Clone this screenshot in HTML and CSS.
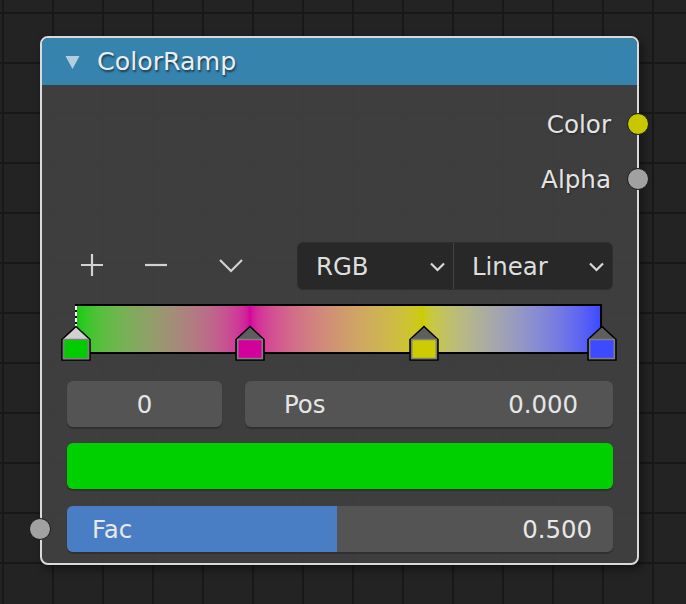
FILE: index.html
```html
<!DOCTYPE html>
<html>
<head>
<meta charset="utf-8">
<link rel="stylesheet" href="styles.css">
</head>
<body>
<div class="canvas">
  <div class="node">
    <div class="header">
      <svg class="collapse" width="15" height="15" viewBox="0 0 15 15"><polygon points="0.5,1 14.5,1 7.5,14" fill="#b3cfdd"/></svg>
      <span class="title">ColorRamp</span>
    </div>
    <div class="body">
      <div class="out-row"><span>Color</span><span class="socket sock-out sock-yellow"></span></div>
      <div class="out-row"><span>Alpha</span><span class="socket sock-out sock-grey"></span></div>

      <div class="tools">
        <svg class="tool tool-plus" width="24" height="24" viewBox="0 0 24 24"><path d="M12 1V23M1 12H23" stroke="#d2d2d2" stroke-width="2.2" fill="none"/></svg>
        <svg class="tool tool-minus" width="24" height="24" viewBox="0 0 24 24"><path d="M1 12H23" stroke="#d2d2d2" stroke-width="2.2" fill="none"/></svg>
        <svg class="tool tool-chev" width="26" height="24" viewBox="0 0 26 24"><path d="M2 6L13 17L24 6" stroke="#d2d2d2" stroke-width="2.2" fill="none"/></svg>
        <div class="dropdowns">
          <div class="dd dd-left"><span>RGB</span><svg width="17" height="12" viewBox="0 0 17 12"><path d="M2 2.5L8.5 9L15 2.5" stroke="#d8d8d8" stroke-width="2.2" fill="none"/></svg></div>
          <div class="dd dd-right"><span>Linear</span><svg width="17" height="12" viewBox="0 0 17 12"><path d="M2 2.5L8.5 9L15 2.5" stroke="#d8d8d8" stroke-width="2.2" fill="none"/></svg></div>
        </div>
      </div>

      <div class="ramp-wrap">
        <div class="ramp"></div>
        <div class="active-line"></div>
        <svg class="stop" style="left:1px" width="30" height="36" viewBox="0 0 30 36"><path d="M1 14.5L15 1.5L29 14.5V35H1Z" fill="#d0d0d0" stroke="#000" stroke-width="1.5"/><rect x="2.75" y="14.5" width="24.5" height="19" fill="#00cc00" stroke="#808080" stroke-width="1.5"/></svg>
        <svg class="stop" style="left:175px" width="30" height="36" viewBox="0 0 30 36"><path d="M1 14.5L15 1.5L29 14.5V35H1Z" fill="#5e5e5e" stroke="#000" stroke-width="1.5"/><rect x="2.75" y="14.5" width="24.5" height="19" fill="#d4009c" stroke="#808080" stroke-width="1.5"/></svg>
        <svg class="stop" style="left:349px" width="30" height="36" viewBox="0 0 30 36"><path d="M1 14.5L15 1.5L29 14.5V35H1Z" fill="#5e5e5e" stroke="#000" stroke-width="1.5"/><rect x="2.75" y="14.5" width="24.5" height="19" fill="#cccc00" stroke="#808080" stroke-width="1.5"/></svg>
        <svg class="stop" style="left:527px" width="30" height="36" viewBox="0 0 30 36"><path d="M1 14.5L15 1.5L29 14.5V35H1Z" fill="#5e5e5e" stroke="#000" stroke-width="1.5"/><rect x="2.75" y="14.5" width="24.5" height="19" fill="#3d4aff" stroke="#808080" stroke-width="1.5"/></svg>
      </div>

      <div class="fields">
        <div class="field field-idx">0</div>
        <div class="field field-pos"><span>Pos</span><span>0.000</span></div>
      </div>

      <div class="swatch"></div>

      <div class="fac">
        <span class="socket sock-in sock-grey"></span>
        <div class="fac-bar">
          <div class="fac-fill" style="width:49.4%"></div>
          <span class="fac-label">Fac</span>
          <span class="fac-value">0.500</span>
        </div>
      </div>
    </div>
  </div>
</div>
</body>
</html>
```
FILE: styles.css
```css
html, body {
  margin: 0;
  padding: 0;
}
body {
  width: 686px;
  height: 604px;
  overflow: hidden;
  background-color: #232323;
  background-image:
    linear-gradient(to right, #181818 0, #181818 2px, transparent 2px),
    linear-gradient(to bottom, #181818 0, #181818 2px, transparent 2px);
  background-size: 50px 50px;
  background-position: 2px 12px;
  font-family: "DejaVu Sans", "Liberation Sans", sans-serif;
  color: #e4e4e4;
}
.canvas {
  position: relative;
  width: 686px;
  height: 604px;
}
.node {
  position: absolute;
  left: 40px;
  top: 36px;
  width: 599px;
  box-sizing: border-box;
  border: 2px solid #dadada;
  border-radius: 8px;
  background: rgba(63, 63, 63, 0.97);
  box-shadow: 3px 4px 8px rgba(0, 0, 0, 0.45);
}
.header {
  height: 47px;
  background: rgba(54, 133, 176, 0.98);
  border-radius: 6px 6px 0 0;
  display: flex;
  align-items: center;
  padding-left: 23px;
}
.collapse {
  display: block;
  margin-top: 2px;
}
.title {
  margin-left: 17px;
  font-size: 25.3px;
  color: #e8eef2;
  text-shadow: 1px 2px 2px rgba(0, 0, 0, 0.55);
  line-height: 1;
  margin-top: 1px;
}
.body {
  padding: 12px 24px 11px 25px;
}
.out-row {
  position: relative;
  height: 55px;
  display: flex;
  align-items: center;
  justify-content: flex-end;
  padding-right: 2px;
  font-size: 24.6px;
  text-shadow: 1px 1px 2px rgba(0, 0, 0, 0.4);
}
.socket {
  position: absolute;
  width: 20px;
  height: 20px;
  border-radius: 50%;
  border: 1.5px solid #1a1a1a;
  box-sizing: content-box;
}
.sock-out {
  right: -36px;
  top: 50%;
  margin-top: -11.5px;
}
.sock-yellow { background: #c7c700; }
.sock-grey { background: #a1a1a1; }

.tools {
  margin-top: 35px;
  height: 48px;
  display: flex;
  align-items: center;
}
.tool { display: block; flex: none; }
.tool-plus { margin-left: 13px; margin-top: -2px; }
.tool-minus { margin-left: 40px; margin-top: -2px; }
.tool-chev { margin-left: 50px; margin-top: 0px; }
.dropdowns {
  margin-left: auto;
  width: 316px;
  height: 48px;
  display: flex;
  background: #282828;
  border: 1px solid #2e2e2e;
  box-sizing: border-box;
  border-radius: 6px;
}
.dd {
  display: flex;
  align-items: center;
  justify-content: space-between;
  font-size: 24.4px;
  color: #dedede;
  box-sizing: border-box;
}
.dd svg { display: block; margin-top: 2px; }
.dd-left {
  width: 156px;
  padding: 0 7px 0 18px;
  border-right: 1px solid #444;
}
.dd-right {
  flex: 1;
  padding: 0 7px 0 18px;
}

.ramp-wrap {
  position: relative;
  margin-top: 14px;
  height: 56px;
}
.ramp {
  position: absolute;
  left: 8px;
  top: 0;
  width: 527px;
  height: 50px;
  box-sizing: border-box;
  border: 2px solid #000;
  border-left-width: 1px;
  background: linear-gradient(to right, #00cc00 0%, #9c9a6e 16%, #d4009c 33.2%, #d8956e 50%, #cccc00 66.2%, #a8b0b8 80%, #3d4aff 100%);
  background: linear-gradient(to right in srgb-linear, #00cc00 0%, #d4009c 33.2%, #cccc00 66.2%, #3d4aff 100%);
}
.active-line {
  position: absolute;
  left: 8px;
  top: 2px;
  width: 2px;
  height: 24px;
  background: repeating-linear-gradient(to bottom, #ffffff 0, #ffffff 4px, #000 4px, #000 6px);
}
.stop {
  position: absolute;
  top: 21px;
  display: block;
  transform: translateX(-7px);
}

.fields {
  margin-top: 21px;
  display: flex;
  gap: 23px;
  height: 46px;
}
.field {
  background: #545454;
  border-radius: 6px;
  box-shadow: 0 2px 1px rgba(0, 0, 0, 0.22);
  font-size: 24.4px;
  color: #e6e6e6;
  display: flex;
  align-items: center;
  box-sizing: border-box;
}
.field-idx {
  width: 155px;
  justify-content: center;
}
.field-pos {
  flex: 1;
  justify-content: space-between;
  padding: 0 35px 0 39px;
}
.swatch {
  margin-top: 16px;
  height: 46px;
  background: #00d000;
  border-radius: 6px;
  box-shadow: 0 2px 1px rgba(0, 0, 0, 0.22);
}
.fac {
  position: relative;
  margin-top: 17px;
  height: 46px;
}
.sock-in {
  left: -38px;
  top: 50%;
  margin-top: -11.5px;
}
.fac-bar {
  position: relative;
  height: 46px;
  background: #545454;
  border-radius: 6px;
  overflow: hidden;
  box-shadow: 0 2px 1px rgba(0, 0, 0, 0.22);
  display: flex;
  align-items: center;
  justify-content: space-between;
  padding: 0 21px 0 25px;
  font-size: 24.4px;
  color: #e8e8e8;
}
.fac-fill {
  position: absolute;
  left: 0;
  top: 0;
  bottom: 0;
  background: #4a7ec4;
}
.fac-label, .fac-value {
  position: relative;
}
```
